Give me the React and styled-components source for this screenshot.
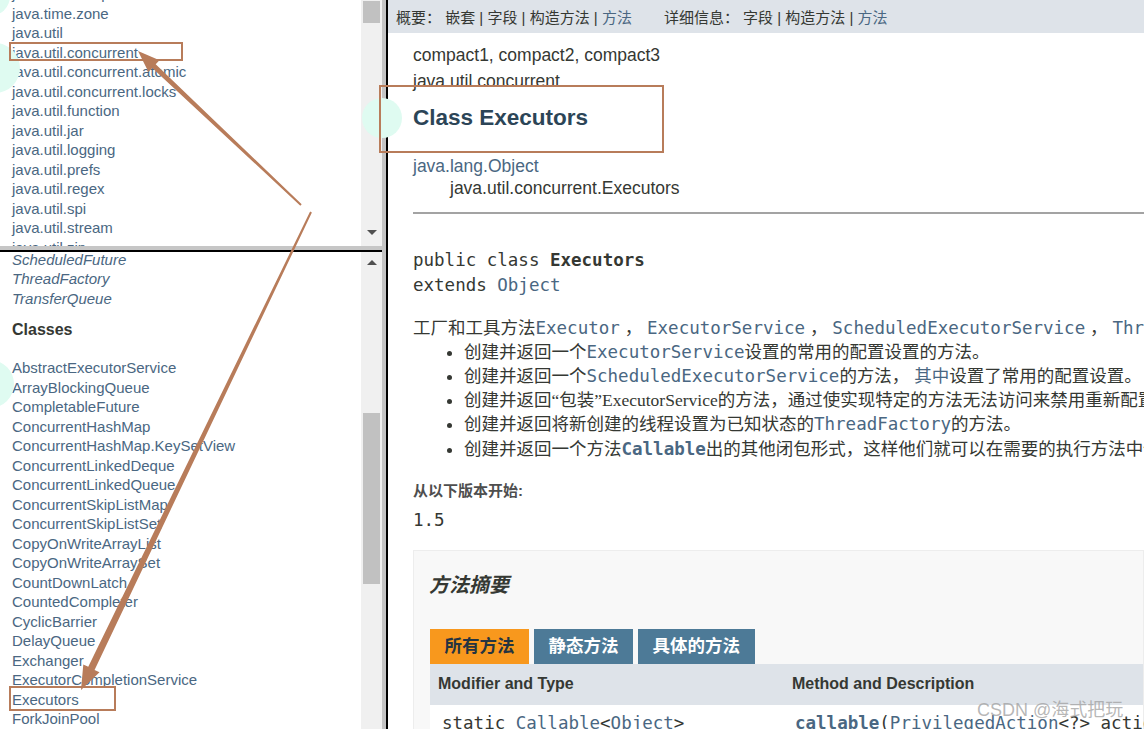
import React from 'react'
import styled, { createGlobalStyle } from 'styled-components'

const SANS = `"Liberation Sans", Arial, "Noto Sans CJK SC", sans-serif`
const SERIF = `"Liberation Serif", "Noto Sans CJK SC", serif`
const MONO = `"DejaVu Sans Mono", "Noto Sans CJK SC", monospace`
const LINK = '#4a6782'
const TEXT = '#353833'
const MARK = '#b87c5a'

const GlobalStyle = createGlobalStyle`
  html, body { margin: 0; padding: 0; background: #fff; overflow: hidden; }
  #root { width: 1144px; height: 729px; }
`

const Page = styled.div`
  position: relative;
  display: flex;
  width: 1144px;
  height: 729px;
  overflow: hidden;
  font-family: ${SANS};
  background: #fff;
`

const LeftCol = styled.div`
  width: 382px;
  display: flex;
  flex-direction: column;
  flex-shrink: 0;
`

const Frame = styled.div`
  display: flex;
  height: ${p => (p.$h ? `${p.$h}px` : 'auto')};
  flex: ${p => (p.$h ? '0 0 auto' : '1')};
  overflow: hidden;
`

const FrameBody = styled.div`
  flex: 1;
  overflow: hidden;
  padding-left: 12px;
  white-space: nowrap;
`

const Track = styled.div`
  width: 21px;
  background: #f0f0f0;
  display: flex;
  flex-direction: column;
  align-items: center;
`

const Thumb = styled.div`
  width: 17px;
  height: ${p => p.$h}px;
  margin-top: ${p => p.$top}px;
  background: #c1c1c1;
`

const Spacer = styled.div`
  flex: 1;
`

const ArrowTri = styled.div`
  width: 0;
  height: 0;
  border-left: 5px solid transparent;
  border-right: 5px solid transparent;
  ${p => (p.$up ? 'border-bottom: 5px solid #505050;' : 'border-top: 5px solid #505050;')}
  margin-top: ${p => p.$mt || 0}px;
  margin-bottom: ${p => p.$mb || 0}px;
`

const HDivider = styled.div`
  height: 4px;
  background: #c6c6c6;
  border-bottom: 2px solid #000;
`

const VDivider = styled.div`
  width: 4px;
  flex-shrink: 0;
  background: #c4c4c4;
  border-right: 2px solid #000;
`

const IndexList = styled.ul`
  list-style: none;
  margin: ${p => p.$mt || 0}px 0 0 0;
  padding: 0;
`

const IndexItem = styled.li`
  font-size: 15px;
  line-height: 19.5px;
  color: ${LINK};
  font-style: ${p => (p.$italic ? 'italic' : 'normal')};
`

const IndexHeading = styled.h2`
  font-size: 16px;
  font-weight: bold;
  color: ${TEXT};
  line-height: 19px;
  margin: 12px 0 19px;
`

const RightFrame = styled.div`
  flex: 1;
  overflow: hidden;
  background: #fff;
  white-space: nowrap;
`

const NavBar = styled.div`
  height: 33px;
  background: #dee3e9;
  display: flex;
  align-items: center;
  padding-left: 8px;
  font-size: 15px;
  color: ${TEXT};
`

const NavGroup = styled.div`
  margin-left: ${p => p.$ml || 0}px;
`

const NavLink = styled.span`
  color: ${LINK};
`

const Content = styled.div`
  padding-left: 25px;
`

const SubTitle = styled.div`
  font-size: 17.5px;
  line-height: 26px;
  color: ${TEXT};
  margin-top: ${p => p.$mt || 0}px;
`

const Title = styled.h1`
  margin: 9px 0 0;
  font-size: 22.5px;
  line-height: 30px;
  font-weight: bold;
  color: #2c4557;
`

const Inherit = styled.div`
  font-size: 17.5px;
  line-height: 22px;
  color: ${p => (p.$link ? LINK : TEXT)};
  margin-top: ${p => p.$mt || 0}px;
  padding-left: ${p => p.$indent || 0}px;
`

const Rule = styled.div`
  margin-top: 13px;
  border-top: 2px solid #a3a3a3;
`

const Signature = styled.pre`
  margin: 34px 0 0;
  font-family: ${MONO};
  font-size: 17.5px;
  line-height: 25px;
  color: ${TEXT};
`

const Strong = styled.b`
  font-weight: bold;
`

const Code = styled.code`
  font-family: ${MONO};
  font-size: 17.5px;
  color: ${p => (p.$plain ? TEXT : LINK)};
  font-weight: ${p => (p.$bold ? 'bold' : 'normal')};
`

const Serif = styled.span`
  font-family: ${SERIF};
`

const Link = styled.span`
  color: ${LINK};
`

const Desc = styled.div`
  margin-top: 17.5px;
  font-size: 17.5px;
  line-height: 24px;
  color: ${TEXT};
`

const Bullets = styled.ul`
  margin: 0;
  padding-left: 51px;
  font-size: 17.5px;
  line-height: 24.25px;
  color: ${TEXT};
  list-style: disc;
`

const DtLabel = styled.div`
  margin-top: 20px;
  font-size: 15px;
  line-height: 20px;
  font-weight: bold;
  color: #4e4e4e;
`

const Version = styled.div`
  margin-top: 7px;
  font-family: ${MONO};
  font-size: 17.5px;
  line-height: 24px;
  color: ${TEXT};
`

const SummaryBox = styled.div`
  margin-top: 18px;
  background: #f8f8f8;
  border: 1px solid #ededed;
  padding: 20px 0 0 15px;
`

const SummaryTitle = styled.h3`
  margin: 0;
  font-size: 20px;
  line-height: 28px;
  font-style: italic;
  font-weight: bold;
  color: ${TEXT};
`

const Tabs = styled.div`
  display: flex;
  gap: 5px;
  margin-top: 30px;
  padding-left: 1px;
`

const Tab = styled.div`
  height: 35px;
  line-height: 35px;
  padding: 0 14.5px;
  font-size: 17.5px;
  font-weight: bold;
  background: ${p => (p.$active ? '#f8981d' : '#4d7a97')};
  color: ${p => (p.$active ? '#253441' : '#fff')};
`

const HeadRow = styled.div`
  display: flex;
  align-items: center;
  height: 41px;
  margin-left: 1px;
  background: #dee3e9;
  font-size: 16px;
  font-weight: bold;
  color: ${TEXT};
`

const HeadCell = styled.div`
  width: ${p => p.$w || 'auto'};
  flex-shrink: 0;
  box-sizing: border-box;
  padding-left: 8px;
`

const DataRow = styled.div`
  display: flex;
  margin-left: 1px;
  background: #fff;
  padding-top: 6px;
  height: 60px;
  font-family: ${MONO};
  font-size: 17.5px;
  line-height: 24px;
  color: ${TEXT};
`

const DataCell = styled.div`
  width: ${p => p.$w || 'auto'};
  flex-shrink: 0;
  box-sizing: border-box;
  padding-left: 12px;
`

const Overlay = styled.svg`
  position: absolute;
  left: 0;
  top: 0;
  pointer-events: none;
`

const Watermark = styled.div`
  position: absolute;
  left: 977px;
  top: 698px;
  font-size: 18px;
  line-height: 24px;
  color: rgba(160, 160, 160, 0.75);
  font-family: ${SANS};
  white-space: nowrap;
`

const packages = [
  'java.time.temporal', 'java.time.zone', 'java.util', 'java.util.concurrent',
  'java.util.concurrent.atomic', 'java.util.concurrent.locks', 'java.util.function',
  'java.util.jar', 'java.util.logging', 'java.util.prefs', 'java.util.regex',
  'java.util.spi', 'java.util.stream', 'java.util.zip', 'javax.accessibility',
]

const interfaces = ['RunnableScheduledFuture', 'ScheduledFuture', 'ThreadFactory', 'TransferQueue']

const classes = [
  'AbstractExecutorService', 'ArrayBlockingQueue', 'CompletableFuture', 'ConcurrentHashMap',
  'ConcurrentHashMap.KeySetView', 'ConcurrentLinkedDeque', 'ConcurrentLinkedQueue',
  'ConcurrentSkipListMap', 'ConcurrentSkipListSet', 'CopyOnWriteArrayList',
  'CopyOnWriteArraySet', 'CountDownLatch', 'CountedCompleter', 'CyclicBarrier', 'DelayQueue',
  'Exchanger', 'ExecutorCompletionService', 'Executors', 'ForkJoinPool', 'ForkJoinTask',
]

// tapered brush arrow from tail to tip
function arrowPoints(tail, tip, w0, w1, headLen, headW) {
  const dx = tip[0] - tail[0]
  const dy = tip[1] - tail[1]
  const len = Math.hypot(dx, dy)
  const ux = dx / len
  const uy = dy / len
  const nx = -uy
  const ny = ux
  const bx = tip[0] - ux * headLen
  const by = tip[1] - uy * headLen
  return [
    [tail[0] + nx * w0, tail[1] + ny * w0],
    [bx + nx * w1, by + ny * w1],
    [bx + nx * headW, by + ny * headW],
    tip,
    [bx - nx * headW, by - ny * headW],
    [bx - nx * w1, by - ny * w1],
    [tail[0] - nx * w0, tail[1] - ny * w0],
  ].map(p => p.join(',')).join(' ')
}

function Annotations() {
  return (
    <Overlay width="1144" height="729" viewBox="0 0 1144 729">
      <circle cx="-10" cy="-4" r="20" fill="#dffbf1" />
      <circle cx="-5" cy="68" r="25" fill="#dffbf1" />
      <circle cx="-10" cy="384" r="24" fill="#dffbf1" />
      <circle cx="382" cy="118" r="20" fill="#dffbf1" />
      <rect x="10" y="43" width="172" height="17" fill="none" stroke={MARK} strokeWidth="2" />
      <rect x="10" y="687" width="105" height="23" fill="none" stroke={MARK} strokeWidth="2" />
      <rect x="380" y="86" width="283" height="66" fill="none" stroke={MARK} strokeWidth="2" />
      <polygon points={arrowPoints([301, 205], [138, 51], 1, 2.5, 22, 8)} fill={MARK} />
      <polygon points={arrowPoints([311, 212], [81, 690], 1, 3.5, 24, 9)} fill={MARK} />
    </Overlay>
  )
}

export default function App() {
  return (
    <>
      <GlobalStyle />
      <Page>
        <LeftCol>
          <Frame $h={246}>
            <FrameBody>
              <IndexList $mt={-16}>
                {packages.map(p => <IndexItem key={p}>{p}</IndexItem>)}
              </IndexList>
            </FrameBody>
            <Track>
              <Thumb $top={1} $h={22} />
              <Spacer />
              <ArrowTri $mb={11} />
            </Track>
          </Frame>
          <HDivider />
          <Frame>
            <FrameBody>
              <IndexList $mt={-22}>
                {interfaces.map(i => <IndexItem key={i} $italic>{i}</IndexItem>)}
              </IndexList>
              <IndexHeading>Classes</IndexHeading>
              <IndexList>
                {classes.map(c => <IndexItem key={c}>{c}</IndexItem>)}
              </IndexList>
            </FrameBody>
            <Track>
              <ArrowTri $up $mt={8} />
              <Thumb $top={148} $h={171} />
            </Track>
          </Frame>
        </LeftCol>
        <VDivider />
        <RightFrame>
          <NavBar>
            <NavGroup>概要：&nbsp;嵌套 | 字段 | 构造方法 | <NavLink>方法</NavLink></NavGroup>
            <NavGroup $ml={32}>详细信息：&nbsp;字段 | 构造方法 | <NavLink>方法</NavLink></NavGroup>
          </NavBar>
          <Content>
            <SubTitle $mt={9}>compact1, compact2, compact3</SubTitle>
            <SubTitle>java.util.concurrent</SubTitle>
            <Title>Class Executors</Title>
            <Inherit $link $mt={22}>java.lang.Object</Inherit>
            <Inherit $indent={37}>java.util.concurrent.Executors</Inherit>
            <Rule />
            <Signature>
              public class <Strong>Executors</Strong>{'\n'}extends <Link>Object</Link>
            </Signature>
            <Desc>
              工厂和工具方法<Code>Executor</Code> ， <Code>ExecutorService</Code> ， <Code>ScheduledExecutorService</Code> ， <Code>ThreadFactory</Code> 和 <Code>Callable</Code>在此包中定义的类。
            </Desc>
            <Bullets>
              <li>创建并返回一个<Code>ExecutorService</Code>设置的常用的配置设置的方法。</li>
              <li>创建并返回一个<Code>ScheduledExecutorService</Code>的方法， <Link>其中</Link>设置了常用的配置设置。</li>
              <li>创建并返回<Serif>“包装”ExecutorService</Serif>的方法，通过使实现特定的方法无法访问来禁用重新配置的方法。</li>
              <li>创建并返回将新创建的线程设置为已知状态的<Code>ThreadFactory</Code>的方法。</li>
              <li>创建并返回一个方法<Code $bold>Callable</Code>出的其他闭包形式，这样他们就可以在需要的执行方法中使用Callable。</li>
            </Bullets>
            <DtLabel>从以下版本开始:</DtLabel>
            <Version>1.5</Version>
            <SummaryBox>
              <SummaryTitle>方法摘要</SummaryTitle>
              <Tabs>
                <Tab $active>所有方法</Tab>
                <Tab>静态方法</Tab>
                <Tab>具体的方法</Tab>
              </Tabs>
              <HeadRow>
                <HeadCell $w="354px">Modifier and Type</HeadCell>
                <HeadCell>Method and Description</HeadCell>
              </HeadRow>
              <DataRow>
                <DataCell $w="353px">
                  static <Link>Callable</Link>&lt;<Link>Object</Link>&gt;
                </DataCell>
                <DataCell>
                  <Code $bold>callable</Code>(<Link>PrivilegedAction</Link>&lt;?&gt; action)
                </DataCell>
              </DataRow>
            </SummaryBox>
          </Content>
        </RightFrame>
        <Annotations />
        <Watermark>CSDN @海式把玩</Watermark>
      </Page>
    </>
  )
}
